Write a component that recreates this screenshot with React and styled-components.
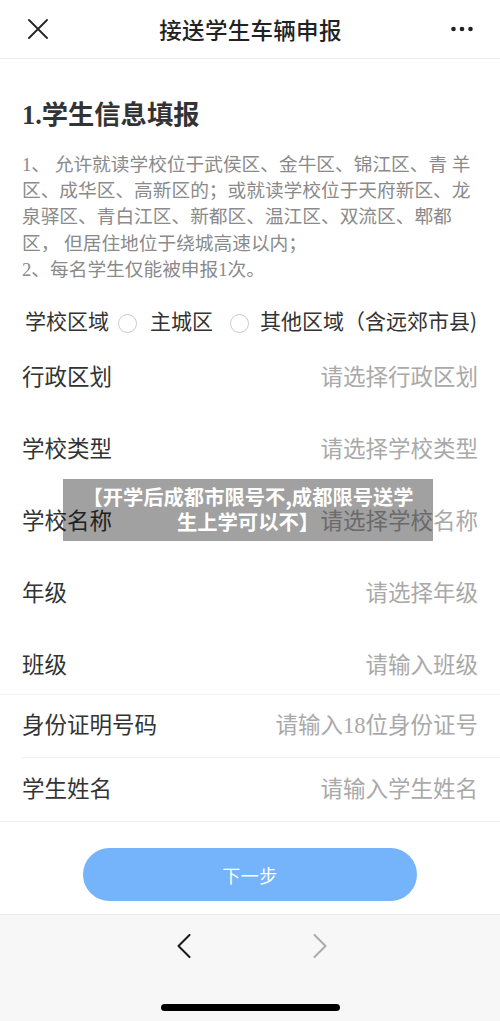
import React from "react";
import styled, { createGlobalStyle } from "styled-components";

const Global = createGlobalStyle`
  html, body { margin: 0; padding: 0; background: #ffffff; }
  body {
    font-family: "Liberation Serif", "Noto Sans CJK SC", sans-serif;
    -webkit-font-smoothing: antialiased;
  }
  * { box-sizing: border-box; }
`;

const Page = styled.div`
  position: relative;
  width: 500px;
  height: 1021px;
  display: flex;
  flex-direction: column;
  background: #ffffff;
  overflow: hidden;
`;

const Header = styled.header`
  height: 59px;
  flex: none;
  display: grid;
  grid-template-columns: 1fr auto 1fr;
  align-items: center;
  padding: 0 27px 0 28px;
  border-bottom: 1px solid #ededed;
`;

const HeaderTitle = styled.h1`
  margin: 0;
  font-family: "Noto Sans CJK SC", sans-serif;
  font-size: 22.5px;
  font-weight: 500;
  line-height: 30px;
  color: #222222;
  letter-spacing: 0.3px;
`;

const HeaderButton = styled.div`
  display: flex;
  align-items: center;
  justify-content: ${(p) => (p.$right ? "flex-end" : "flex-start")};
  height: 30px;
`;

const Content = styled.main`
  flex: none;
  padding-top: 39px;
  border-bottom: 1px solid #f0f0f0;
`;

const SectionTitle = styled.h2`
  margin: 0 22px;
  font-size: 26.3px;
  font-weight: 700;
  line-height: 36px;
  color: #333333;
`;

const Notes = styled.div`
  margin: 18px 22px 0;
  font-size: 18.7px;
  line-height: 26.2px;
  color: #8a8a8a;
`;

const NoteLine = styled.div`
  white-space: nowrap;
`;

const RadioRow = styled.div`
  margin-top: 23px;
  height: 28px;
  display: flex;
  align-items: center;
  padding-left: 25px;
  font-family: "Noto Sans CJK SC", sans-serif;
  font-size: 21px;
  color: #333333;
  white-space: nowrap;
`;

const RadioLabel = styled.span`
  line-height: 28px;
`;

const RadioCircle = styled.span`
  width: 19px;
  height: 19px;
  border-radius: 50%;
  border: 1px solid #cccccc;
  background: #ffffff;
  margin-top: 7px;
  margin-left: ${(p) => p.$gap}px;
  margin-right: ${(p) => p.$after}px;
  flex: none;
`;

const FieldGroup = styled.div`
  margin-top: 16px;
  display: flex;
  flex-direction: column;
  gap: 16px;
  border-bottom: 1px solid #f1f1f1;
`;

const Field = styled.div`
  height: ${(p) => p.$h}px;
  display: flex;
  align-items: center;
  justify-content: space-between;
  padding: 0 22px;
  margin-left: ${(p) => (p.$inset ? 22 : 0)}px;
  padding-left: ${(p) => (p.$inset ? 0 : 22)}px;
  border-bottom: ${(p) => (p.$line ? "1px solid #f1f1f1" : "none")};
  font-size: 22.5px;
  line-height: 30px;
  white-space: nowrap;
`;

const FieldLabel = styled.span`
  color: #333333;
`;

const Placeholder = styled.span`
  color: #a9a9a9;
`;

const ButtonArea = styled.div`
  flex: none;
  padding: 26px 83px 13px;
`;

const NextButton = styled.button`
  width: 100%;
  height: 53px;
  border: none;
  border-radius: 27px;
  background: #75b3fb;
  color: #ffffff;
  font-family: "Noto Sans CJK SC", sans-serif;
  font-size: 18px;
  letter-spacing: 0.5px;
  display: flex;
  align-items: center;
  justify-content: center;
  padding: 0;
`;

const BottomBar = styled.footer`
  flex: 1;
  background: #f7f7f7;
  border-top: 1px solid #ececec;
  display: flex;
  flex-direction: column;
  align-items: center;
  padding-top: 19px;
`;

const NavRow = styled.div`
  display: flex;
  align-items: center;
  gap: 122px;
  height: 24px;
  margin-left: 3px;
`;

const HomeIndicator = styled.div`
  margin-top: 46px;
  width: 179px;
  height: 7px;
  border-radius: 4px;
  background: #000000;
`;

const Caption = styled.div`
  position: absolute;
  top: 479px;
  left: 63px;
  width: 370px;
  height: 62px;
  background: rgba(0, 0, 0, 0.37);
  color: #ffffff;
  font-family: "Noto Sans CJK SC", sans-serif;
  font-weight: 700;
  font-size: 20.3px;
  line-height: 25px;
  text-align: center;
  padding-top: 5px;
  white-space: nowrap;
`;

const notes = [
  "1、 允许就读学校位于武侯区、金牛区、锦江区、青 羊",
  "区、成华区、高新区的；或就读学校位于天府新区、龙",
  "泉驿区、青白江区、新都区、温江区、双流区、郫都",
  "区， 但居住地位于绕城高速以内；",
  "2、每名学生仅能被申报1次。",
];

const groupFields = [
  ["行政区划", "请选择行政区划"],
  ["学校类型", "请选择学校类型"],
  ["学校名称", "请选择学校名称"],
  ["年级", "请选择年级"],
  ["班级", "请输入班级"],
];

const CloseIcon = () => (
  <svg width="20" height="20" viewBox="0 0 20 20">
    <path d="M1 1 L19 19 M19 1 L1 19" stroke="#222" strokeWidth="1.8" strokeLinecap="round" />
  </svg>
);

const MoreIcon = () => (
  <svg width="22" height="6" viewBox="0 0 22 6">
    <circle cx="2.5" cy="3" r="2.3" fill="#222" />
    <circle cx="11" cy="3" r="2.3" fill="#222" />
    <circle cx="19.5" cy="3" r="2.3" fill="#222" />
  </svg>
);

const Chevron = ({ dir, color }) => (
  <svg width="14" height="24" viewBox="0 0 14 24">
    <path
      d={dir === "left" ? "M12.5 1 L1.5 12 L12.5 23" : "M1.5 1 L12.5 12 L1.5 23"}
      fill="none"
      stroke={color}
      strokeWidth="2"
      strokeLinecap="round"
      strokeLinejoin="round"
    />
  </svg>
);

export default function App() {
  return (
    <>
      <Global />
      <Page>
        <Header>
          <HeaderButton>
            <CloseIcon />
          </HeaderButton>
          <HeaderTitle>接送学生车辆申报</HeaderTitle>
          <HeaderButton $right>
            <MoreIcon />
          </HeaderButton>
        </Header>

        <Content>
          <SectionTitle>1.学生信息填报</SectionTitle>
          <Notes>
            {notes.map((n) => (
              <NoteLine key={n}>{n}</NoteLine>
            ))}
          </Notes>

          <RadioRow>
            <RadioLabel>学校区域</RadioLabel>
            <RadioCircle $gap={9} $after={13} />
            <RadioLabel>主城区</RadioLabel>
            <RadioCircle $gap={17} $after={11} />
            <RadioLabel>其他区域（含远郊市县)</RadioLabel>
          </RadioRow>

          <FieldGroup>
            {groupFields.map(([label, ph]) => (
              <Field key={label} $h={56}>
                <FieldLabel>{label}</FieldLabel>
                <Placeholder>{ph}</Placeholder>
              </Field>
            ))}
          </FieldGroup>

          <Field $h={63} $inset $line>
            <FieldLabel>身份证明号码</FieldLabel>
            <Placeholder>请输入18位身份证号</Placeholder>
          </Field>
          <Field $h={63}>
            <FieldLabel>学生姓名</FieldLabel>
            <Placeholder>请输入学生姓名</Placeholder>
          </Field>
        </Content>

        <ButtonArea>
          <NextButton>下一步</NextButton>
        </ButtonArea>

        <BottomBar>
          <NavRow>
            <Chevron dir="left" color="#1a1a1a" />
            <Chevron dir="right" color="#ababab" />
          </NavRow>
          <HomeIndicator />
        </BottomBar>

        <Caption>
          【开学后成都市限号不,成都限号送学
          <br />
          生上学可以不】
        </Caption>
      </Page>
    </>
  );
}
